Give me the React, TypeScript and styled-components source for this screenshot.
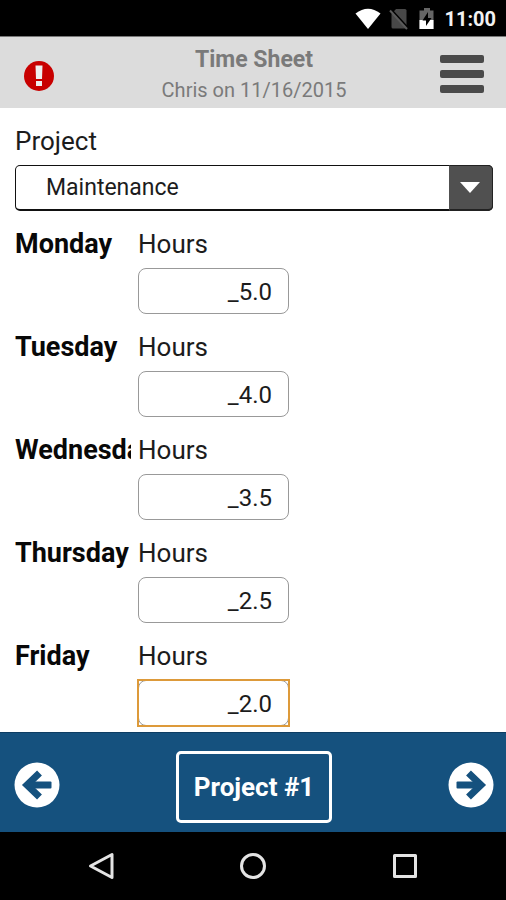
import React from 'react';
import styled, { createGlobalStyle } from 'styled-components';

const GlobalStyle = createGlobalStyle`
  *, *::before, *::after { box-sizing: border-box; }
  body { margin: 0; background: #fff; }
  button, input, select { font: inherit; color: inherit; margin: 0; }
`;

const Screen = styled.div`
  display: flex;
  flex-direction: column;
  height: 100vh;
  overflow: hidden;
  font-family: Roboto, 'Liberation Sans', sans-serif;
  font-size: 23px;
  line-height: 32px;
  color: #1c1c1c;
`;

const StatusBar = styled.div`
  flex: none;
  display: flex;
  align-items: center;
  justify-content: flex-end;
  height: 36px;
  padding: 2px 10px 0;
  background: #000;
  color: #f2f2f2;
`;

const StatusIcons = styled.div`
  display: flex;
  gap: 8px;
  margin-right: 7px;
`;

const Clock = styled.time`
  font-size: 20px;
  font-weight: 700;
`;

const Header = styled.header`
  flex: none;
  display: grid;
  grid-template-columns: 50px 1fr 46px;
  align-items: center;
  height: 72px;
  padding: 4px 20px 0 14px;
  background: #dcdcdc;
  border-top: 1px solid #777;
  color: #7a7a7a;
  text-align: center;
`;

const Heading = styled.div`
  padding-left: 4px;
`;

const Title = styled.h1`
  margin: 0;
  font-size: 23px;
  line-height: 30px;
  font-weight: 700;
`;

const Subtitle = styled.p`
  margin: 0;
  font-size: 20px;
  line-height: 30px;
`;

const IconButton = styled.button`
  display: flex;
  align-items: center;
  justify-content: center;
  padding: 0;
  border: 0;
  background: none;
  cursor: pointer;
`;

const AlertButton = styled(IconButton)`
  padding-top: 2px;
`;

const MenuButton = styled(IconButton)`
  padding-bottom: 2px;
`;

const Form = styled.form`
  flex: 1;
  min-height: 0;
  overflow: hidden;
  padding: 17px 13px 0 15px;
`;

const FieldLabel = styled.label`
  display: block;
  font-size: 26px;
`;

const SelectBox = styled.div`
  position: relative;
  height: 46px;
  margin: 8px 0 17px;
`;

const Select = styled.select`
  appearance: none;
  width: 100%;
  height: 100%;
  padding: 1px 60px 0 30px;
  border: 1px solid #111;
  border-bottom-width: 2px;
  border-radius: 5px;
  background: #fff;
  font-size: 23px;
`;

const SelectArrow = styled.span`
  position: absolute;
  top: 0;
  right: 0;
  bottom: 0;
  display: flex;
  align-items: center;
  justify-content: center;
  width: 44px;
  padding-right: 2px;
  border: 1px solid #222;
  border-left-color: #505050;
  border-bottom-width: 2px;
  border-radius: 0 5px 5px 0;
  background: #505050;
  pointer-events: none;
`;

const DayRow = styled.section`
  display: grid;
  grid-template-columns: 116px 151px;
  column-gap: 7px;
  padding-bottom: 17px;
`;

const DayName = styled.h2`
  margin: 0;
  overflow: hidden;
  font-size: 27px;
  line-height: 32px;
  font-weight: 700;
  color: #080808;
`;

const InputFrame = styled.div<{ $active?: boolean }>`
  height: 46px;
  margin-top: 8px;
  outline: ${(p) => (p.$active ? '2px solid #dd9a3a' : 'none')};
  outline-offset: -1px;
`;

const HoursInput = styled.input`
  display: block;
  width: 100%;
  height: 100%;
  padding: 2px 16px 0;
  border: 1px solid #999;
  border-radius: 8px;
  background: #fff;
  font-size: 24px;
  text-align: right;
  outline: none;
`;

const Footer = styled.footer`
  flex: none;
  display: flex;
  align-items: center;
  justify-content: space-between;
  height: 100px;
  padding: 4px 12px 0 14px;
  border-top: 1px solid #0d3d63;
  background: #15517e;
`;

const ProjectButton = styled.button`
  height: 72px;
  width: 156px;
  margin-top: 4px;
  padding: 0;
  border: 3px solid #fff;
  border-radius: 5px;
  background: none;
  color: #fff;
  font-size: 26px;
  font-weight: 700;
  white-space: nowrap;
`;

const SystemNav = styled.nav`
  flex: none;
  display: flex;
  align-items: center;
  justify-content: center;
  gap: 120px;
  height: 68px;
  background: #000;
`;

const ArrowIcon = ({ flipped = false }: { flipped?: boolean }) => (
  <svg width="46" height="46" viewBox="0 0 46 46" aria-hidden="true">
    <g transform={flipped ? 'translate(46 0) scale(-1 1)' : undefined}>
      <circle cx="23" cy="23" r="22.5" fill="#fff" />
      <path
        d="M25.500 11 13 23 25.500 35"
        fill="none"
        stroke="#15517e"
        strokeWidth="7"
      />
      <path d="M14 19.500H36.500Q37.500 19.500 37.500 20.500V25.500Q37.500 26.500 36.500 26.500H14z" fill="#15517e" />
    </g>
  </svg>
);

const days = [
  { name: 'Monday', hours: '_5.0' },
  { name: 'Tuesday', hours: '_4.0' },
  { name: 'Wednesday', hours: '_3.5' },
  { name: 'Thursday', hours: '_2.5' },
  { name: 'Friday', hours: '_2.0', active: true },
];

export default function App() {
  return (
    <Screen>
      <GlobalStyle />
      <StatusBar>
        <StatusIcons>
          <svg width="26" height="22" viewBox="0 0 26 22" aria-hidden="true">
            <path d="M.5 5.500Q13-4 25.500 5.500L13 21z" fill="#fff" />
          </svg>
          <svg width="20" height="22" viewBox="0 0 20 22" aria-hidden="true">
            <path d="M7 1h9a1.500 1.500 0 0 1 1.500 1.500V19a1.500 1.500 0 0 1-1.500 1.500H4A1.500 1.500 0 0 1 2.500 19V6z" fill="#484848" />
            <path d="M2.500 2 19 20" stroke="#000" strokeWidth="2" />
            <path d="M1 2.500 18 21" stroke="#5a5a5a" strokeWidth="2" />
          </svg>
          <svg width="20" height="22" viewBox="0 0 20 22" aria-hidden="true">
            <path d="M7 0h6v2.500h3.500V21h-14V2.500H7z" fill="#666" />
            <path d="M2.500 12h14v9h-14z" fill="#fff" />
            <path d="M11 4 5.500 12.500H9V18l5.500-8H11z" fill="#000" />
          </svg>
        </StatusIcons>
        <Clock>11:00</Clock>
      </StatusBar>

      <Header>
        <AlertButton type="button" aria-label="Show errors">
          <svg width="30" height="30" viewBox="0 0 30 30" aria-hidden="true">
            <circle cx="15" cy="15" r="15" fill="#c80000" />
            <path d="M11.500 4.500h7l-.5 13.500h-6zM12 20h6v5h-6z" fill="#eee" />
          </svg>
        </AlertButton>
        <Heading>
          <Title>Time Sheet</Title>
          <Subtitle>Chris on 11/16/2015</Subtitle>
        </Heading>
        <MenuButton type="button" aria-label="Menu">
          <svg width="46" height="38" viewBox="0 0 46 38" fill="#4a4a4a" aria-hidden="true">
            <rect width="44" height="8" rx="2" />
            <rect y="15" width="44" height="8" rx="2" />
            <rect y="30" width="44" height="8" rx="2" />
          </svg>
        </MenuButton>
      </Header>

      <Form>
        <FieldLabel htmlFor="project">Project</FieldLabel>
        <SelectBox>
          <Select id="project" defaultValue="Maintenance">
            <option>Maintenance</option>
          </Select>
          <SelectArrow>
            <svg width="20" height="11" viewBox="0 0 20 11" aria-hidden="true">
              <path d="M0 0h20L10 11z" fill="#fff" />
            </svg>
          </SelectArrow>
        </SelectBox>
        {days.map((day) => (
          <DayRow key={day.name}>
            <DayName>{day.name}</DayName>
            <div>
              <FieldLabel htmlFor={`hours-${day.name}`}>Hours</FieldLabel>
              <InputFrame $active={day.active}>
                <HoursInput
                  id={`hours-${day.name}`}
                  inputMode="decimal"
                  defaultValue={day.hours}
                />
              </InputFrame>
            </div>
          </DayRow>
        ))}
      </Form>

      <Footer>
        <IconButton type="button" aria-label="Previous project"><ArrowIcon /></IconButton>
        <ProjectButton type="button">Project #1</ProjectButton>
        <IconButton type="button" aria-label="Next project"><ArrowIcon flipped /></IconButton>
      </Footer>

      <SystemNav>
        <IconButton type="button" aria-label="Back">
          <svg width="32" height="32" viewBox="0 0 32 32" fill="none" stroke="#e4e4e4" strokeWidth="3" strokeLinejoin="round" aria-hidden="true">
            <path d="M27 4.500v23L5.500 16z" />
          </svg>
        </IconButton>
        <IconButton type="button" aria-label="Home">
          <svg width="32" height="32" viewBox="0 0 32 32" fill="none" stroke="#e4e4e4" strokeWidth="3" aria-hidden="true">
            <circle cx="16" cy="16" r="11.500" />
          </svg>
        </IconButton>
        <IconButton type="button" aria-label="Recent apps">
          <svg width="32" height="32" viewBox="0 0 32 32" fill="none" stroke="#e4e4e4" strokeWidth="3" strokeLinejoin="round" aria-hidden="true">
            <rect x="5.500" y="5.500" width="21" height="21" />
          </svg>
        </IconButton>
      </SystemNav>
    </Screen>
  );
}
